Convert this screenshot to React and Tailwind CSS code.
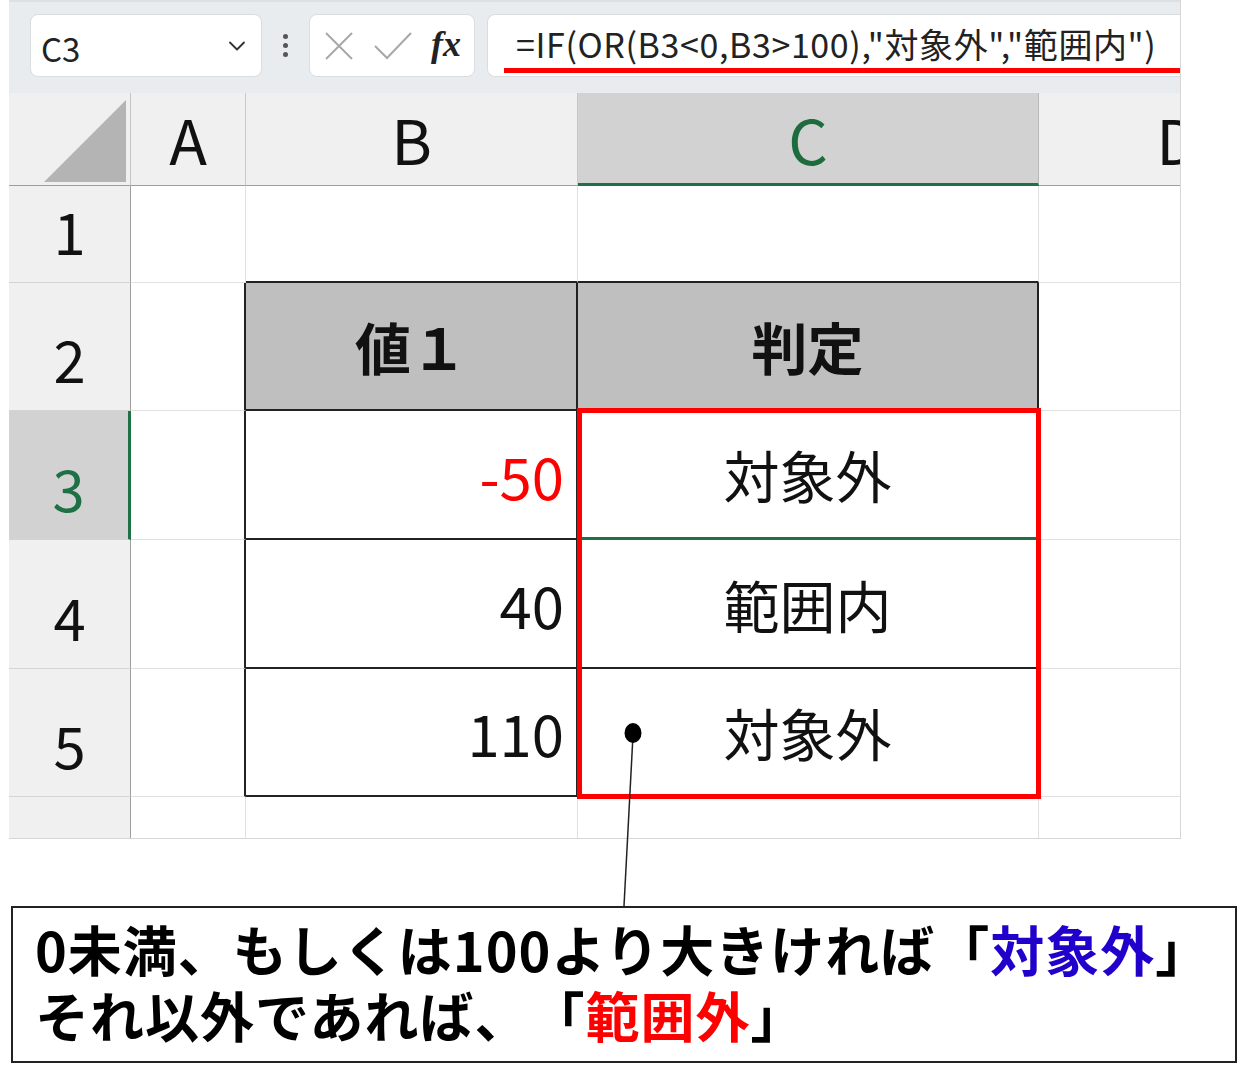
import React from "react";
import { ChevronDown } from "lucide-react";

const rowsH = ["h-[97px]", "h-[128px]", "h-[129px]", "h-[129px]", "h-[128px]", "h-[41px]"];

function RowHeader({ n, h, selected }) {
  return (
    <div
      className={
        "flex items-end justify-center pb-[16px] border-b border-b-[#d4d4d4] " +
        h +
        (selected
          ? " bg-[#d2d2d2] border-r-[3px] border-r-[#1e7145] text-[#1e7145]"
          : " bg-[#f0f0f0] border-r border-r-[#9e9e9e] text-[#111]")
      }
    >
      <span className="text-[58px] leading-[72px]">{n}</span>
    </div>
  );
}

function Cell({ className = "", children }) {
  return <div className={"flex items-center " + className}>{children}</div>;
}

export default function App() {
  const grid = "border-r border-b border-r-[#e1e1e1] border-b-[#e1e1e1]";
  const tb = "border-r-2 border-b-2 border-r-[#222] border-b-[#222]";
  return (
    <div className="relative w-[1240px] h-[1081px] bg-white overflow-hidden font-['Noto_Sans_CJK_JP','Noto_Sans',sans-serif] text-[#111]">
      {/* Excel block */}
      <div className="ml-[9px] w-[1172px] overflow-hidden border-r border-b border-[#d6d6d6]">
        {/* toolbar */}
        <div className="h-[93px] bg-[#e9ecef] border-t-2 border-t-[#dde1e5] flex items-start pt-[12px] pl-[21px]">
          <div className="w-[232px] h-[63px] bg-white rounded-[8px] border border-[#d9dde1] flex items-center pl-[10px] pr-[10px] justify-between">
            <span className="text-[33px] leading-none pt-[6px] text-[#222]">C3</span>
            <ChevronDown size={28} strokeWidth={1.6} className="text-[#333]" />
          </div>
          <div className="w-[47px] h-[63px] flex flex-col items-center justify-center gap-[4px]">
            <span className="w-[5px] h-[5px] rounded-full bg-[#555]" />
            <span className="w-[5px] h-[5px] rounded-full bg-[#555]" />
            <span className="w-[5px] h-[5px] rounded-full bg-[#555]" />
          </div>
          <div className="w-[166px] h-[63px] bg-white rounded-[8px] border border-[#d9dde1] flex items-center pl-[13px] gap-[18px]">
            <svg width="32" height="32" viewBox="0 0 32 32">
              <path d="M3 3 L29 29 M29 3 L3 29" stroke="#a8a8a8" strokeWidth="2" fill="none" />
            </svg>
            <svg width="40" height="32" viewBox="0 0 40 32">
              <path d="M2 16 L14 28 L38 3" stroke="#a8a8a8" strokeWidth="2" fill="none" />
            </svg>
            <span className="font-['Liberation_Serif',serif] italic font-bold text-[36px] leading-none text-[#222] -mt-[4px]">fx</span>
          </div>
          <div className="relative ml-[12px] flex-1 h-[63px] bg-white rounded-l-[8px] border border-r-0 border-[#d9dde1] flex items-center pl-[28px]">
            <span className="text-[34px] tracking-[0.6px] leading-none text-[#222] whitespace-nowrap -mt-[4px]">
              =IF(OR(B3&lt;0,B3&gt;100),"対象外","範囲内")
            </span>
            <div className="absolute left-[16px] right-0 bottom-[3px] h-[5px] bg-[#ff0000]" />
          </div>
        </div>

        {/* sheet grid */}
        <div className="grid grid-cols-[122px_115px_332px_461px_278px] w-[1308px]">
          {/* column headers */}
          <div className="h-[93px] bg-[#f0f0f0] border-r border-b border-r-[#c4c4c4] border-b-[#9e9e9e] relative">
            <svg className="absolute left-[35px] top-[7px]" width="82" height="82" viewBox="0 0 82 82">
              <polygon points="82,0 82,82 0,82" fill="#b4b4b4" />
            </svg>
          </div>
          <div className="h-[93px] bg-[#f0f0f0] border-r border-b border-r-[#c8c8c8] border-b-[#9e9e9e] flex items-center justify-center">
            <span className="text-[62px] leading-none -mt-[2px]">A</span>
          </div>
          <div className="h-[93px] bg-[#f0f0f0] border-r border-b border-r-[#c8c8c8] border-b-[#9e9e9e] flex items-center justify-center">
            <span className="text-[62px] leading-none -mt-[2px]">B</span>
          </div>
          <div className="h-[93px] bg-[#d2d2d2] border-r border-b-[3px] border-r-[#b8b8b8] border-b-[#1e7145] flex items-center justify-center">
            <span className="text-[62px] leading-none text-[#1e6b3e]">C</span>
          </div>
          <div className="h-[93px] bg-[#f0f0f0] border-r border-b border-r-[#c8c8c8] border-b-[#9e9e9e] flex items-center justify-center">
            <span className="text-[62px] leading-none -mt-[2px]">D</span>
          </div>

          {/* row 1 */}
          <RowHeader n="1" h={rowsH[0]} />
          <Cell className={grid + " " + rowsH[0]} />
          <Cell className={"border-r border-r-[#e1e1e1] border-b-2 border-b-[#222] " + rowsH[0]} />
          <Cell className={"border-r border-r-[#e1e1e1] border-b-2 border-b-[#222] " + rowsH[0]} />
          <Cell className={grid + " " + rowsH[0]} />

          {/* row 2 */}
          <RowHeader n="2" h={rowsH[1]} />
          <Cell className={"border-r-2 border-r-[#222] border-b border-b-[#e1e1e1] " + rowsH[1]} />
          <Cell className={tb + " bg-[#bfbfbf] justify-center " + rowsH[1]}>
            <span className="text-[56px] font-bold leading-none">値１</span>
          </Cell>
          <Cell className={tb + " bg-[#bfbfbf] justify-center " + rowsH[1]}>
            <span className="text-[56px] font-bold leading-none">判定</span>
          </Cell>
          <Cell className={grid + " " + rowsH[1]} />

          {/* row 3 */}
          <RowHeader n="3" h={rowsH[2]} selected />
          <Cell className={"border-r-2 border-r-[#222] border-b border-b-[#e1e1e1] " + rowsH[2]} />
          <Cell className={tb + " justify-end pr-[12px] " + rowsH[2]}>
            <span className="text-[58px] leading-none text-[#ff0000]">-50</span>
          </Cell>
          <Cell className={"border-r-2 border-b-[3px] border-r-[#222] border-b-[#1e7145] justify-center " + rowsH[2]}>
            <span className="text-[56px] leading-none">対象外</span>
          </Cell>
          <Cell className={grid + " " + rowsH[2]} />

          {/* row 4 */}
          <RowHeader n="4" h={rowsH[3]} />
          <Cell className={"border-r-2 border-r-[#222] border-b border-b-[#e1e1e1] " + rowsH[3]} />
          <Cell className={tb + " justify-end pr-[12px] " + rowsH[3]}>
            <span className="text-[58px] leading-none">40</span>
          </Cell>
          <Cell className={tb + " justify-center " + rowsH[3]}>
            <span className="text-[56px] leading-none">範囲内</span>
          </Cell>
          <Cell className={grid + " " + rowsH[3]} />

          {/* row 5 */}
          <RowHeader n="5" h={rowsH[4]} />
          <Cell className={"border-r-2 border-r-[#222] border-b border-b-[#e1e1e1] " + rowsH[4]} />
          <Cell className={tb + " justify-end pr-[12px] " + rowsH[4]}>
            <span className="text-[58px] leading-none">110</span>
          </Cell>
          <Cell className={tb + " justify-center " + rowsH[4]}>
            <span className="text-[56px] leading-none">対象外</span>
          </Cell>
          <Cell className={grid + " " + rowsH[4]} />

          {/* row 6 */}
          <div className={"bg-[#f0f0f0] border-r border-r-[#9e9e9e] " + rowsH[5]} />
          <Cell className={"border-r border-r-[#e1e1e1] " + rowsH[5]} />
          <Cell className={"border-r border-r-[#e1e1e1] " + rowsH[5]} />
          <Cell className={"border-r border-r-[#e1e1e1] " + rowsH[5]} />
          <Cell className={rowsH[5]} />
        </div>
      </div>

      {/* callout */}
      <div className="mt-[67px] ml-[11px] w-[1226px] h-[157px] border-2 border-[#222] pl-[22px] pt-[8px] font-bold text-[54px] tracking-[1px] leading-[66px] text-black whitespace-nowrap">
        <div>
          0未満、もしくは100より大きければ「<span className="text-[#2200cc]">対象外</span>」
        </div>
        <div>
          それ以外であれば、<span className="inline-block w-[1px]" />「<span className="text-[#ff0000]">範囲外</span>」
        </div>
      </div>

      {/* red highlight box */}
      <div className="absolute left-[577px] top-[408px] w-[464px] h-[391px] border-[5px] border-[#ff0000]" />

      {/* pointer */}
      <svg className="absolute left-0 top-0 pointer-events-none" width="1240" height="1081" viewBox="0 0 1240 1081">
        <line x1="633" y1="735" x2="624" y2="906" stroke="#222" strokeWidth="1.5" />
        <ellipse cx="633" cy="733" rx="8.5" ry="10" fill="#000" />
      </svg>
    </div>
  );
}
